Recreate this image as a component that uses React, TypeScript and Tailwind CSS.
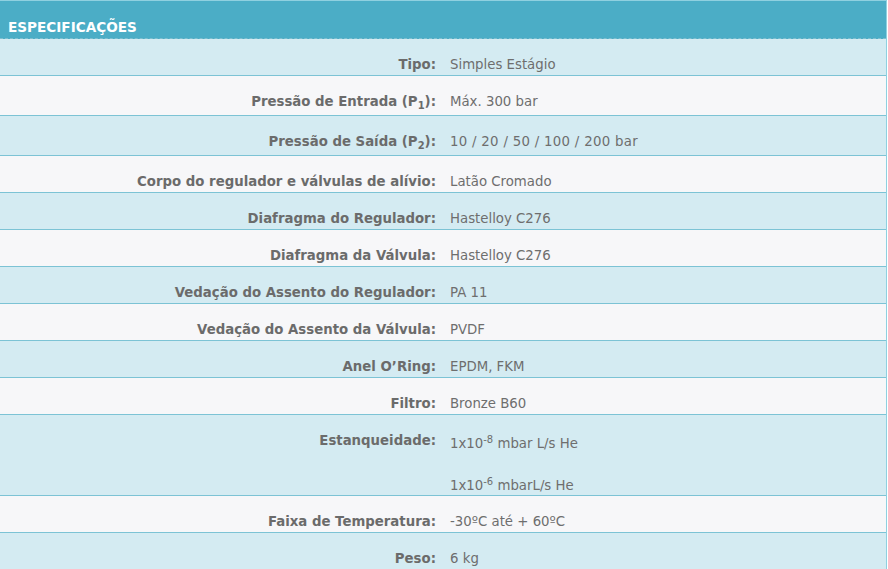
import React from 'react';

type Spec = { label: React.ReactNode; value: React.ReactNode; h: string };

const SPECS: Spec[] = [
  { label: 'Tipo:', value: 'Simples Estágio', h: 'h-[37px]' },
  {
    label: (
      <>
        Pressão de Entrada (P<sub className="text-[10px]">1</sub>):
      </>
    ),
    value: 'Máx. 300 bar',
    h: 'h-[40px]',
  },
  {
    label: (
      <>
        Pressão de Saída (P<sub className="text-[10px]">2</sub>):
      </>
    ),
    value: <span className="tracking-[0.3px]">10 / 20 / 50 / 100 / 200 bar</span>,
    h: 'h-[40px]',
  },
  { label: 'Corpo do regulador e válvulas de alívio:', value: 'Latão Cromado', h: 'h-[37px]' },
  { label: 'Diafragma do Regulador:', value: 'Hastelloy C276', h: 'h-[37px]' },
  { label: 'Diafragma da Válvula:', value: 'Hastelloy C276', h: 'h-[37px]' },
  { label: 'Vedação do Assento do Regulador:', value: 'PA 11', h: 'h-[37px]' },
  { label: 'Vedação do Assento da Válvula:', value: 'PVDF', h: 'h-[37px]' },
  { label: 'Anel O’Ring:', value: 'EPDM, FKM', h: 'h-[37px]' },
  { label: 'Filtro:', value: 'Bronze B60', h: 'h-[37px]' },
  {
    label: 'Estanqueidade:',
    value: (
      <>
        <span className="block pt-[3px]">
          1x10<sup className="text-[10px]">-8</sup> mbar L/s He
        </span>
        <span className="mt-[26px] block">
          1x10<sup className="text-[10px]">-6</sup> mbarL/s He
        </span>
      </>
    ),
    h: 'h-[81px]',
  },
  { label: 'Faixa de Temperatura:', value: '-30ºC até + 60ºC', h: 'h-[37px]' },
  { label: 'Peso:', value: '6 kg', h: 'h-[37px]' },
];

export default function App() {
  return (
    <div className="min-h-[569px] bg-white font-['DejaVu_Sans','Verdana',sans-serif] text-[13.3px] leading-4">
      <div className="w-[887px] border-t border-r border-[#8fd0e0] bg-[#f7f7f9]">
        <div className="flex h-[38px] items-end border-b border-dashed border-[#7fbfd0] bg-[#4badc6] px-2 pb-[3px]">
          <h2 className="text-[13.6px] font-bold text-white">ESPECIFICAÇÕES</h2>
        </div>
        {SPECS.map((s, i) => (
          <div
            key={i}
            className={`grid grid-cols-[436px_1fr] gap-[14px] border-b border-[#7cc3d5] pt-[18px] text-[#6e6e6e] ${s.h} ${
              i % 2 === 0 ? 'bg-[#d4ebf2]' : 'bg-[#f7f7f9]'
            }`}
          >
            <div className="text-right font-bold text-[#6b6b6b]">{s.label}</div>
            <div>{s.value}</div>
          </div>
        ))}
      </div>
    </div>
  );
}
